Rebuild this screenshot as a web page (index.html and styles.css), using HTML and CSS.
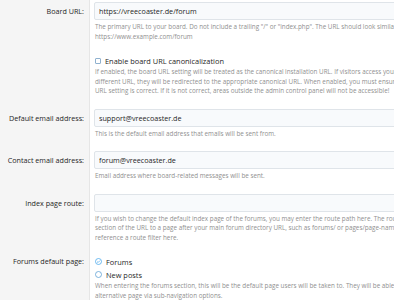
FILE: index.html
```html
<!DOCTYPE html>
<html lang="en">
<head>
    <meta charset="UTF-8">
    <meta name="viewport" content="width=device-width, initial-scale=1.0">
    <title>Options: Basic board information</title>
    <link rel="stylesheet" href="styles.css">
</head>
<body>
    <div class="form">
        <div class="form-row">
            <div class="form-label">Board URL:</div>
            <div class="form-input">
                <input class="input" type="text" value="https://vreecoaster.de/forum">
                <div class="explain">The primary URL to your board. Do not include a trailing "/" or "index.php". The URL should look similar to<br>https://www.example.com/forum</div>
            </div>
        </div>

        <div class="form-row">
            <div class="form-label"></div>
            <div class="form-input">
                <label class="choice">
                    <span class="check"></span>
                    Enable board URL canonicalization
                </label>
                <div class="explain">If enabled, the board URL setting will be treated as the canonical installation URL. If visitors access your site via a<br>different URL, they will be redirected to the appropriate canonical URL. When enabled, you must ensure the board<br>URL setting is correct. If it is not correct, areas outside the admin control panel will not be accessible!</div>
            </div>
        </div>

        <div class="form-row">
            <div class="form-label">Default email address:</div>
            <div class="form-input">
                <input class="input" type="text" value="support@vreecoaster.de">
                <div class="explain">This is the default email address that emails will be sent from.</div>
            </div>
        </div>

        <div class="form-row">
            <div class="form-label">Contact email address:</div>
            <div class="form-input">
                <input class="input" type="text" value="forum@vreecoaster.de">
                <div class="explain">Email address where board-related messages will be sent.</div>
            </div>
        </div>

        <div class="form-row">
            <div class="form-label">Index page route:</div>
            <div class="form-input">
                <input class="input" type="text" value="">
                <div class="explain">If you wish to change the default index page of the forums, you may enter the route path here. The route path should be the<br>section of the URL to a page after your main forum directory URL, such as forums/ or pages/page-name/. You may also<br>reference a route filter here.</div>
            </div>
        </div>

        <div class="form-row">
            <div class="form-label label-radio">Forums default page:</div>
            <div class="form-input">
                <label class="choice">
                    <span class="radio checked">
                        <svg viewBox="0 0 10 10" width="7" height="7"><circle cx="5" cy="5" r="4.3" fill="none" stroke="#47a7eb" stroke-width="1.1"/><path d="M3 5.2 L4.4 6.5 L7 3.8" fill="none" stroke="#47a7eb" stroke-width="1.1"/></svg>
                    </span>
                    Forums
                </label>
                <label class="choice">
                    <span class="radio">
                        <svg viewBox="0 0 10 10" width="7" height="7"><circle cx="5" cy="5" r="4.3" fill="none" stroke="#5a9fd4" stroke-width="1.1"/></svg>
                    </span>
                    New posts
                </label>
                <div class="explain">When entering the forums section, this will be the default page users will be taken to. They will be able to access the<br>alternative page via sub-navigation options.</div>
            </div>
        </div>
    </div>
</body>
</html>
```

FILE: styles.css
```css
* {
    margin: 0;
    padding: 0;
    box-sizing: border-box;
}

body {
    font-family: 'Open Sans', 'Noto Sans', sans-serif;
    font-size: 7.2px;
    color: #262626;
    background: white;
    overflow: hidden;
}

.form {
    width: 640px;
    margin-top: -4.5px;
}

.form-row {
    display: grid;
    grid-template-columns: 90px 1fr;
}

.form-label {
    background: #f5f5f5;
    border-right: 1px solid #e6e6e6;
    padding: 6.5px 5px 6.5px 0;
    text-align: right;
    line-height: 18px;
}

.label-radio {
    line-height: 13px;
}

.form-input {
    padding: 6.5px 0 6.5px 4px;
}

.input {
    display: block;
    width: 100%;
    height: 18px;
    padding: 0 4px;
    border: 1px solid #dfe4e9;
    border-radius: 2px;
    background: #f8fafc;
    font-family: inherit;
    font-size: 7.2px;
    color: #262626;
}

.explain {
    margin-top: 2px;
    padding-left: 1px;
    font-size: 6.3px;
    line-height: 9.5px;
    color: #909090;
    white-space: nowrap;
}

.choice {
    display: flex;
    align-items: center;
    gap: 4px;
    height: 13px;
    padding-left: 1px;
    font-size: 7.4px;
}

.choice + .explain {
    margin-top: 0;
}

.check {
    width: 6px;
    height: 6px;
    border: 1px solid #8fb1cf;
    border-radius: 1px;
    background: white;
}

.radio {
    display: flex;
    width: 7px;
    height: 7px;
}
```
